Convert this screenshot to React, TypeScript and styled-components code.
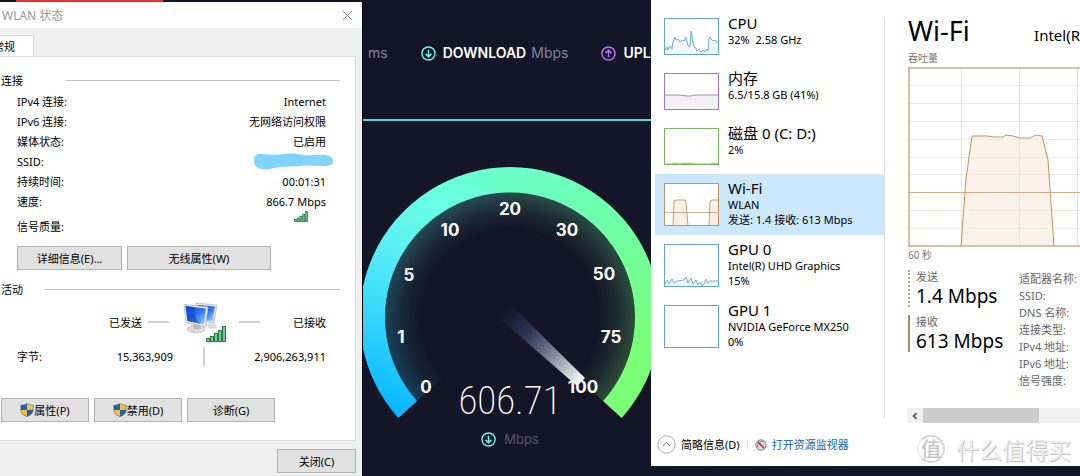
import React from "react";
import styled, { createGlobalStyle, css } from "styled-components";

const UI_FONT = '"Noto Sans", "Noto Sans CJK SC", sans-serif';
const DIAL_FONT = 'Inter, "Open Sans", sans-serif';

const GlobalStyle = createGlobalStyle`
  *, *::before, *::after { box-sizing: border-box; }
  body {
    margin: 0;
    background: #141526;
    font-family: ${UI_FONT};
    font-size: 11px;
    line-height: 15px;
    color: #000;
  }
  h1, h2, h3, p, dl, dd, dt, ul { margin: 0; padding: 0; font-weight: 400; }
  button { font: inherit; color: inherit; cursor: pointer; }
  svg { display: block; flex: none; }
`;

const Desktop = styled.main`
  display: grid;
  grid-template-columns: minmax(0, 363fr) minmax(0, 288fr) minmax(0, 429fr);
  min-height: 100vh;
  overflow: hidden;
  white-space: nowrap;
`;

/* ---------- WLAN status dialog ---------- */

const Dialog = styled.section`
  display: flex;
  flex-direction: column;
  min-width: 0;
  overflow: hidden;
  background: #efefef;
  border-right: 1px solid #05060c;
`;

const BackdropEdge = styled.div`
  display: flex;
  height: 2px;
  padding-left: 16px;
  background: #141526;
  &::before {
    content: "";
    width: 147px;
    background: #ee2d2d;
  }
`;

const TitleBar = styled.header`
  display: flex;
  align-items: center;
  justify-content: space-between;
  height: 26px;
  padding: 0 9px 0 2px;
  background: #fff;
  color: #999;
`;

const DialogTitle = styled.h1`
  font-size: 12px;
`;

const CloseButton = styled.button`
  padding: 0;
  border: 0;
  background: none;
  color: #888;
`;

const TabStrip = styled.div`
  display: flex;
  padding-top: 7px;
`;

const Tab = styled.button`
  width: 34px;
  height: 22px;
  margin-bottom: -1px;
  padding: 0 18px 0 0;
  display: flex;
  justify-content: flex-end;
  align-items: center;
  border: 1px solid #dcdcdc;
  border-width: 1px 1px 0 0;
  background: #fff;
`;

const TabPanel = styled.div`
  flex: 1;
  margin-right: 6px;
  padding: 16px 15px 18px 1px;
  border: 1px solid #dcdcdc;
  border-left: 0;
  background: #fff;
`;

const SectionHead = styled.div<{ $gap: number }>`
  display: flex;
  align-items: center;
  gap: ${(p) => p.$gap}px;
  height: 15px;
  &::after {
    content: "";
    flex: 1;
    height: 1px;
    background: #bfbfbf;
  }
`;

const SectionTitle = styled.h2`
  font-size: 11px;
`;

const Facts = styled.dl`
  padding: 3px 14px 0 16px;
`;

const Fact = styled.div<{ $tall?: boolean }>`
  display: flex;
  justify-content: space-between;
  align-items: ${(p) => (p.$tall ? "flex-end" : "center")};
  height: ${(p) => (p.$tall ? 23 : 20)}px;
`;

const SignalValue = styled.dd`
  align-self: flex-start;
  padding-right: 18px;
`;

const HiddenName = styled.dd`
  margin-right: -7px;
`;

const ButtonRow = styled.div`
  display: flex;
  gap: 5px;
`;

const ConnectionActions = styled(ButtonRow)`
  padding: 12px 0 12px 16px;
`;

const DeviceActions = styled(ButtonRow)`
  padding-top: 30px;
`;

const PushButton = styled.button<{ $width: number }>`
  display: flex;
  align-items: center;
  justify-content: center;
  width: ${(p) => p.$width}px;
  height: 24px;
  padding: 0;
  border: 1px solid #b4b4b4;
  background: #e1e1e1;
`;

const Activity = styled.div`
  display: grid;
  grid-template-columns: minmax(0, 156fr) 62px minmax(0, 91fr);
  align-items: center;
  padding: 3px 14px 0 16px;
`;

const Dashed = styled.div<{ $side: "left" | "right" }>`
  display: flex;
  align-items: center;
  gap: 6px;
  height: 44px;
  ${(p) =>
    p.$side === "left"
      ? css`
          justify-content: flex-end;
          padding-right: 4px;
          &::after { content: ""; width: 21px; height: 2px; background: #d2d2d2; }
        `
      : css`
          justify-content: space-between;
          padding-left: 4px;
          &::before { content: ""; width: 21px; height: 2px; background: #d2d2d2; }
        `}
`;

const Center = styled.div`
  display: flex;
  justify-content: center;
`;

const Divider = styled.div`
  width: 2px;
  height: 19px;
  background: #d2d2d2;
`;

const Counter = styled.div`
  display: flex;
  justify-content: space-between;
  align-items: center;
  height: 24px;
`;

const DialogFooter = styled.footer`
  display: flex;
  justify-content: flex-end;
  padding: 8px 6px 3px 0;
`;

/* ---------- Speed test ---------- */

const SpeedTest = styled.section`
  display: flex;
  flex-direction: column;
  min-width: 0;
  overflow: hidden;
  background: #141526;
  font-family: ${DIAL_FONT};
  color: #fff;
`;

const Readings = styled.header`
  display: flex;
  gap: 33px;
  padding: 43px 0 56px 5px;
  border-bottom: 2px solid #58d8d4;
  font-size: 14px;
  line-height: 20px;
`;

const Reading = styled.div`
  display: flex;
  align-items: center;
  flex: none;
`;

const ReadingName = styled.strong`
  margin: 0 5px 0 7px;
  font-weight: 600;
`;

const Unit = styled.span<{ $dim?: boolean }>`
  color: ${(p) => (p.$dim ? "#55566a" : "#8183a0")};
`;

const Gauge = styled.div`
  display: grid;
  justify-content: center;
  padding: 39px 0 0 6px;
  > * { grid-area: 1 / 1; }
`;

const GaugeLabel = styled.text`
  font-size: 17px;
  font-weight: 700;
  fill: #fff;
  text-anchor: middle;
`;

const Readout = styled.div`
  align-self: end;
  display: flex;
  flex-direction: column;
  align-items: center;
  padding-bottom: 25px;
`;

const Speed = styled.output`
  font-family: "Roboto Condensed", Roboto, sans-serif;
  font-size: 39px;
  font-weight: 200;
  line-height: 44px;
`;

const SpeedUnit = styled.div`
  display: flex;
  align-items: center;
  gap: 8px;
  padding-top: 6px;
  font-size: 13px;
  line-height: 20px;
`;

/* ---------- Task manager ---------- */

const TaskManager = styled.section`
  display: flex;
  flex-direction: column;
  min-width: 0;
  overflow: hidden;
  margin-bottom: 10px;
  background: #fff;
`;

const Performance = styled.div`
  display: grid;
  grid-template-columns: 234px minmax(0, 1fr);
  flex: 1;
`;

const Resources = styled.nav`
  margin: 18px 0 5px;
  border-right: 1px solid #dcdcdc;
`;

const ResourceList = styled.ul`
  margin-top: -9px;
  padding-left: 4px;
  list-style: none;
`;

const Resource = styled.button<{ $active?: boolean }>`
  display: flex;
  align-items: flex-start;
  gap: 9px;
  width: 100%;
  padding: 9px;
  border: 0;
  background: ${(p) => (p.$active ? "#cce8ff" : "transparent")};
  text-align: left;
`;

const ResourceText = styled.span`
  display: flex;
  flex-direction: column;
  margin: -4px 0 -9px;
`;

const ResourceName = styled.span`
  font-size: 15px;
  line-height: 18px;
`;

const Detail = styled.div`
  min-width: 0;
  overflow: hidden;
  padding: 12px 0 0 23px;
`;

const DetailHead = styled.header`
  display: flex;
  align-items: baseline;
  justify-content: space-between;
`;

const DetailTitle = styled.h2`
  font-size: 27px;
  line-height: 38px;
`;

const Adapter = styled.p`
  font-size: 15px;
`;

const AxisLabel = styled.p`
  height: 17px;
  font-size: 10px;
  line-height: 16px;
  color: #777;
`;

const Stats = styled.div`
  display: flex;
  gap: 16px;
  padding-top: 6px;
`;

const Rates = styled.dl`
  display: flex;
  flex-direction: column;
  gap: 8px;
  width: 95px;
`;

const Rate = styled.div<{ $dotted?: boolean }>`
  height: 37px;
  padding-left: 6px;
  border-left: 2px ${(p) => (p.$dotted ? "dotted #c9a084" : "solid #a98a63")};
  dt { line-height: 14px; color: #666; }
  dd { font-size: 19px; line-height: 24px; color: #000; }
`;

const Properties = styled.ul`
  list-style: none;
  line-height: 17px;
  color: #666;
`;

const ScrollBar = styled.div`
  display: flex;
  height: 15px;
  margin: 19px 0 0 -1px;
  background: #f0f0f0;
`;

const ScrollArrow = styled.button`
  display: flex;
  align-items: center;
  justify-content: center;
  width: 16px;
  padding: 0;
  border: 0;
  background: none;
`;

const ScrollThumb = styled.div`
  width: 67%;
  background: #cdcdcd;
`;

const StatusBar = styled.footer`
  display: flex;
  align-items: center;
  height: 43px;
  padding: 0 9px 0 6px;
`;

const LessButton = styled.button`
  display: flex;
  align-items: center;
  gap: 5px;
  padding: 0 7px 0 0;
  border: 0;
  background: none;
`;

const MonitorLink = styled.a`
  display: flex;
  align-items: center;
  gap: 5px;
  padding-left: 7px;
  color: #1464c0;
  text-decoration: none;
`;

const Separator = styled.span`
  width: 1px;
  height: 9px;
  background: #ddd;
`;

const Watermark = styled.div`
  display: flex;
  align-items: center;
  gap: 11px;
  margin-left: auto;
  padding-top: 8px;
  font-family: "Noto Sans CJK SC", sans-serif;
  font-size: 23px;
  line-height: 28px;
  color: #eee;
  text-shadow: 1px 1px 0 #c4c4c4;
`;

const Seal = styled.span`
  display: flex;
  align-items: center;
  justify-content: center;
  width: 28px;
  height: 28px;
  border: 2px solid #d6d6d6;
  border-left-color: #eee;
  border-radius: 50%;
  font-size: 20px;
  font-weight: 500;
  color: #c6c6c6;
  text-shadow: none;
`;

/* ---------- Drawings ---------- */

const SignalBars = ({ width, height }: { width: number; height: number }) => (
  <svg width={width} height={height} viewBox="0 0 20 16" aria-hidden="true">
    {[3, 5, 8, 11, 15].map((h, i) => (
      <rect key={h} x={i * 4 + 0.5} y={15.5 - h} width="3" height={h} fill="#6dbb83" stroke="#1d7a3b" />
    ))}
  </svg>
);

const Shield = () => (
  <svg width="14" height="14" viewBox="0 0 14 14" aria-hidden="true">
    <path d="M7 .5C5.300 1.800 3.200 2.200.8 2.200V6.500C.8 10 3.500 12.500 7 13.600Z" fill="#1c62b8" />
    <path d="M7 .5C8.700 1.800 10.800 2.200 13.200 2.200V6.500C13.200 10 10.500 12.500 7 13.600Z" fill="#fbc02d" />
    <path d="M.8 7H7V13.600C3.500 12.500.8 10 .8 7Z" fill="#fbc02d" />
    <path d="M7 7H13.200C13.200 10 10.500 12.500 7 13.600Z" fill="#1c62b8" />
    <path d="M7 .5C5.300 1.800 3.200 2.200.8 2.200V6.500C.8 10 3.500 12.500 7 13.600C10.500 12.500 13.200 10 13.200 6.500V2.200C10.800 2.200 8.700 1.800 7 .5Z" fill="none" stroke="#71716a" strokeWidth=".7" />
  </svg>
);

const Computers = () => (
  <svg width="43" height="40" viewBox="0 0 43 40" aria-hidden="true">
    <defs>
      <linearGradient id="screen" x1="0" y1="0" x2="1" y2="1">
        <stop offset="0" stopColor="#1b55d8" />
        <stop offset=".5" stopColor="#2c72ee" />
        <stop offset="1" stopColor="#a9dcff" />
      </linearGradient>
    </defs>
    <path d="M13 1L34 3L31 21L15 19Z" fill="#e4e4e4" stroke="#b9b9b9" strokeWidth=".7" />
    <path d="M15 3L32 4.500L29.500 19L17 18Z" fill="url(#screen)" />
    <path d="M22 22L31 21L35 25L28 28Z" fill="#ddd" />
    <ellipse cx="13" cy="27" rx="9" ry="4" fill="#dcdcdc" stroke="#bbb" strokeWidth=".6" />
    <path d="M11 21H17L18 27H10Z" fill="#bcbcbc" />
    <path d="M1 2.500L25 5L22.500 25L3 20.500Z" fill="#ececec" stroke="#adadad" strokeWidth=".7" />
    <path d="M2.500 4L23 6.500L21 22.500L4.500 19Z" fill="url(#screen)" />
    <path d="M2.500 4L12 5.200C10 10 12 16 17 21.600L4.500 19Z" fill="#0b43c6" opacity=".6" />
    <svg x="23" y="24" width="20" height="16" viewBox="0 0 20 16">
      {[3, 5, 8, 11, 15].map((h, i) => (
        <rect key={h} x={i * 4 + 0.5} y={15.5 - h} width="3" height={h} fill="#79c28c" stroke="#2b8049" />
      ))}
    </svg>
  </svg>
);

const CircleArrow = ({ color, up }: { color: string; up?: boolean }) => (
  <svg width="15" height="15" viewBox="0 0 16 16" fill="none" stroke={color} strokeWidth="1.500" aria-hidden="true">
    <circle cx="8" cy="8" r="7" />
    <path d={up ? "M8 12V4.600M4.800 7.600L8 4.500L11.200 7.600" : "M8 4V11.400M4.800 8.400L8 11.500L11.200 8.400"} />
  </svg>
);

const gaugeMarks: [string, number, number][] = [
  ["0", 71, 233], ["1", 46, 183], ["5", 54, 121], ["10", 95, 76], ["20", 155, 55],
  ["30", 212, 76], ["50", 249, 120], ["75", 256, 183], ["100", 228, 233],
];

const Dial = () => (
  <svg width="310" height="314" viewBox="0 0 310 314" fontFamily={DIAL_FONT} role="img" aria-label="Speed gauge">
    <defs>
      <linearGradient id="left" gradientUnits="userSpaceOnUse" x1="43" y1="258" x2="155" y2="20">
        <stop offset="0" stopColor="#06b4ff" />
        <stop offset=".32" stopColor="#38d8fb" />
        <stop offset=".6" stopColor="#5cf1f2" />
        <stop offset=".8" stopColor="#69ffe6" />
        <stop offset="1" stopColor="#6bffc8" />
      </linearGradient>
      <linearGradient id="right" gradientUnits="userSpaceOnUse" x1="155" y1="20" x2="275" y2="200">
        <stop offset="0" stopColor="#6bffc8" />
        <stop offset=".5" stopColor="#70ffa2" />
        <stop offset="1" stopColor="#7aff76" />
      </linearGradient>
      <radialGradient id="fade" gradientUnits="userSpaceOnUse" cx="155" cy="157.500" r="125">
        <stop offset=".7" stopColor="#fff" stopOpacity="0" />
        <stop offset=".85" stopColor="#fff" stopOpacity=".09" />
        <stop offset="1" stopColor="#fff" stopOpacity=".24" />
      </radialGradient>
      <mask id="glow">
        <rect width="310" height="314" fill="url(#fade)" />
      </mask>
      <linearGradient id="needle" gradientUnits="userSpaceOnUse" x1="148" y1="150" x2="227" y2="223">
        <stop offset="0" stopColor="#2a3760" stopOpacity="0" />
        <stop offset=".3" stopColor="#323d63" stopOpacity=".75" />
        <stop offset=".65" stopColor="#8c90a3" />
        <stop offset="1" stopColor="#fff" />
      </linearGradient>
    </defs>
    <g mask="url(#glow)">
      <path d="M155 157.500L62 241A125 125 0 0 1 155 32.500Z" fill="url(#left)" />
      <path d="M155 157.500V32.500A125 125 0 0 1 248 241Z" fill="url(#right)" />
    </g>
    <path d="M43.300 258A150.500 150.500 0 0 1 155.500 7V32.500A125 125 0 0 0 62 241Z" fill="url(#left)" />
    <path d="M155 7A150.500 150.500 0 0 1 266.700 258L248 241A125 125 0 0 0 155 32.500Z" fill="url(#right)" />
    {gaugeMarks.map(([label, x, y]) => (
      <GaugeLabel key={label} x={x} y={y}>{label}</GaugeLabel>
    ))}
    <path d="M142 156L155 144L230 218L222 226Z" fill="url(#needle)" />
  </svg>
);

type ThumbProps = { color: string; tall?: boolean; line?: string; fill?: string; mid?: boolean };

const Thumb = ({ color, tall, line, fill, mid }: ThumbProps) => {
  const h = tall ? 43 : 37;
  return (
    <svg width="55" height={h} viewBox={`0 0 55 ${h}`} fill="none" aria-hidden="true">
      <rect width="55" height={h} fill="#fff" />
      {line && <path d={`M0 ${h}L${line}L55 ${h}Z`} fill={fill} />}
      {line && <polyline points={line} stroke={color} strokeWidth=".9" />}
      {mid && <path d="M0 29.500H55" stroke={color} strokeWidth=".7" />}
      <rect x=".5" y=".5" width="54" height={h - 1} stroke={color} />
    </svg>
  );
};

const resources: { name: string; lines: string[]; thumb: ThumbProps; active?: boolean }[] = [
  {
    name: "CPU",
    lines: ["32%\u00a0 2.58 GHz"],
    thumb: {
      color: "#5fa9c4",
      fill: "#eef5fb",
      line: "0,27 1,32 3,29 4,32 6,28 8,31 9,23 10,22 11,19 12,22 14,21 16,24 18,22 20,23 22,19 23,24 24,27 25,29 26,28 27,13 28,17 29,25 30,29 32,30 33,33 35,31 37,34 39,32 41,34 43,31 44,33 45,20 46,19 47,21 49,23 51,22 53,24 55,25",
    },
  },
  {
    name: "内存",
    lines: ["6.5/15.8 GB (41%)"],
    thumb: { color: "#ad72c0", fill: "#f2eff4", line: "0,22 13,22 15,22 23,23 27,23 29,22 55,22" },
  },
  {
    name: "磁盘 0 (C: D:)",
    lines: ["2%"],
    thumb: { color: "#79b85b", fill: "#e6f3df", line: "0,36 8,36 10,35 14,36 26,35 30,36 46,36 49,35 52,36 55,35" },
  },
  {
    name: "Wi-Fi",
    lines: ["WLAN", "发送: 1.4 接收: 613 Mbps"],
    active: true,
    thumb: { color: "#bf9468", fill: "#fbf0e6", tall: true, mid: true, line: "9,43 10,18 12,17 21,17 22,19 24,43 45,43 46,18 48,17 55,17" },
  },
  {
    name: "GPU 0",
    lines: ["Intel(R) UHD Graphics", "15%"],
    thumb: {
      color: "#5fa9c4",
      fill: "#eef5fb",
      tall: true,
      line: "0,41 3,36 5,40 8,35 10,39 13,37 20,36 22,33 24,39 27,34 29,40 32,36 34,41 36,38 38,42 40,40 42,35 44,39 46,37 55,37",
    },
  },
  { name: "GPU 1", lines: ["NVIDIA GeForce MX250", "0%"], thumb: { color: "#5fa9c4", tall: true } },
];

const throughput = "53,179 58,112 64,69 79,69 86,70 95,70 98,68 105,69 112,71 122,71 128,68 134,69 140,93 146,179";

const ThroughputChart = () => (
  <svg width="100%" height="180" fill="none" role="img" aria-label="吞吐量">
    {[18, 36, 54, 72, 90, 107, 143, 161].map((y) => (
      <line key={y} x1="0" x2="100%" y1={y + 0.5} y2={y + 0.5} stroke="#f0e8de" />
    ))}
    <polygon points={throughput} fill="#fbf2ea" />
    <defs>
      <pattern id="columns" x="53" width="58" height="180" patternUnits="userSpaceOnUse">
        <path d="M.5 0V180" stroke="#ece2d6" />
      </pattern>
    </defs>
    <rect width="100%" height="180" fill="url(#columns)" />
    {[72, 90, 107, 143, 161].map((y) => (
      <line key={y} x1="62" x2="140" y1={y + 0.5} y2={y + 0.5} stroke="#f3e6d8" />
    ))}
    <line x1="0" x2="100%" y1="125.500" y2="125.500" stroke="#d3ad8b" />
    <polyline points={throughput} stroke="#c4935f" />
    <path d="M1 0V180" stroke="#c8ab88" strokeWidth="1.500" />
    <line x1="0" x2="100%" y1="1" y2="1" stroke="#c8ab88" strokeWidth="1.500" />
    <line x1="0" x2="100%" y1="179" y2="179" stroke="#c8ab88" strokeWidth="1.500" />
  </svg>
);

const facts: [string, string][] = [
  ["IPv4 连接:", "Internet"],
  ["IPv6 连接:", "无网络访问权限"],
  ["媒体状态:", "已启用"],
  ["SSID:", ""],
  ["持续时间:", "00:01:31"],
  ["速度:", "866.7 Mbps"],
];

const properties = ["适配器名称:", "SSID:", "DNS 名称:", "连接类型:", "IPv4 地址:", "IPv6 地址:", "信号强度:"];

export default function App() {
  return (
    <>
      <GlobalStyle />
      <Desktop>
        <Dialog aria-label="WLAN 状态">
          <BackdropEdge />
          <TitleBar>
            <DialogTitle>WLAN 状态</DialogTitle>
            <CloseButton aria-label="关闭">
              <svg width="11" height="11" viewBox="0 0 11 11" stroke="currentColor" fill="none">
                <path d="M1 1L10 10M10 1L1 10" />
              </svg>
            </CloseButton>
          </TitleBar>
          <TabStrip>
            <Tab>常规</Tab>
          </TabStrip>
          <TabPanel>
            <SectionHead $gap={43}>
              <SectionTitle>连接</SectionTitle>
            </SectionHead>
            <Facts>
              {facts.map(([label, value]) => (
                <Fact key={label}>
                  <dt>{label}</dt>
                  {value ? (
                    <dd>{value}</dd>
                  ) : (
                    <HiddenName>
                      <svg width="79" height="17" viewBox="0 0 79 17" aria-hidden="true">
                        <path d="M0 6C0 2 3 1 8 1C16 2 24 2 31 1C38 0 44 1 49 2C56 3 64 1 72 2C77 3 79 5 79 8C79 12 76 13 70 13C62 13 54 12 46 13C36 14 28 13 20 15C13 17 7 17 3 14C0 12 0 9 0 6Z" fill="#80d4ff" />
                      </svg>
                    </HiddenName>
                  )}
                </Fact>
              ))}
              <Fact $tall>
                <dt>信号质量:</dt>
                <SignalValue>
                  <SignalBars width={14} height={11} />
                </SignalValue>
              </Fact>
            </Facts>
            <ConnectionActions>
              <PushButton $width={105}>详细信息(E)...</PushButton>
              <PushButton $width={144}>无线属性(W)</PushButton>
            </ConnectionActions>
            <SectionHead $gap={22}>
              <SectionTitle>活动</SectionTitle>
            </SectionHead>
            <Activity>
              <Dashed $side="left">已发送</Dashed>
              <Center><Computers /></Center>
              <Dashed $side="right">已接收</Dashed>
              <Counter><span>字节:</span><span>15,363,909</span></Counter>
              <Center><Divider /></Center>
              <Counter><span /><span>2,906,263,911</span></Counter>
            </Activity>
            <DeviceActions>
              <PushButton $width={88}><Shield />属性(P)</PushButton>
              <PushButton $width={88}><Shield />禁用(D)</PushButton>
              <PushButton $width={88}>诊断(G)</PushButton>
            </DeviceActions>
          </TabPanel>
          <DialogFooter>
            <PushButton $width={79}>关闭(C)</PushButton>
          </DialogFooter>
        </Dialog>

        <SpeedTest aria-label="Speed test">
          <Readings>
            <Reading><Unit>ms</Unit></Reading>
            <Reading>
              <CircleArrow color="#6afff3" />
              <ReadingName>DOWNLOAD</ReadingName>
              <Unit>Mbps</Unit>
            </Reading>
            <Reading>
              <CircleArrow color="#bf71ff" up />
              <ReadingName>UPLOAD</ReadingName>
            </Reading>
          </Readings>
          <Gauge>
            <Dial />
            <Readout>
              <Speed>606.71</Speed>
              <SpeedUnit>
                <CircleArrow color="#6afff3" />
                <Unit $dim>Mbps</Unit>
              </SpeedUnit>
            </Readout>
          </Gauge>
        </SpeedTest>

        <TaskManager aria-label="任务管理器">
          <Performance>
            <Resources>
              <ResourceList>
                {resources.map((r) => (
                  <li key={r.name}>
                    <Resource $active={r.active}>
                      <Thumb {...r.thumb} />
                      <ResourceText>
                        <ResourceName>{r.name}</ResourceName>
                        {r.lines.map((line) => <span key={line}>{line}</span>)}
                      </ResourceText>
                    </Resource>
                  </li>
                ))}
              </ResourceList>
            </Resources>
            <Detail>
              <DetailHead>
                <DetailTitle>Wi-Fi</DetailTitle>
                <Adapter>Intel(R</Adapter>
              </DetailHead>
              <AxisLabel>吞吐量</AxisLabel>
              <ThroughputChart />
              <AxisLabel>60 秒</AxisLabel>
              <Stats>
                <Rates>
                  <Rate $dotted><dt>发送</dt><dd>1.4 Mbps</dd></Rate>
                  <Rate><dt>接收</dt><dd>613 Mbps</dd></Rate>
                </Rates>
                <Properties>
                  {properties.map((p) => <li key={p}>{p}</li>)}
                </Properties>
              </Stats>
              <ScrollBar>
                <ScrollArrow aria-label="向左滚动">
                  <svg width="6" height="8" viewBox="0 0 6 8" fill="none" stroke="#444" strokeWidth="1.500"><path d="M4.500 1L1.500 4L4.500 7" /></svg>
                </ScrollArrow>
                <ScrollThumb />
              </ScrollBar>
            </Detail>
          </Performance>
          <StatusBar>
            <LessButton>
              <svg width="19" height="19" viewBox="0 0 19 19" fill="none" aria-hidden="true">
                <circle cx="9.500" cy="9.500" r="8.700" stroke="#999" strokeWidth=".8" />
                <path d="M6 11L9.500 7.500L13 11" stroke="#777" />
              </svg>
              简略信息(D)
            </LessButton>
            <Separator />
            <MonitorLink href="#">
              <svg width="12" height="12" viewBox="0 0 12 12" aria-hidden="true">
                <circle cx="6" cy="6" r="5.200" fill="#d9dde0" stroke="#85898c" />
                <path d="M3 8.500A4 4 0 0 1 8.500 3" fill="none" stroke="#6d9b7a" />
                <path d="M3 3L9 9" stroke="#d23b32" strokeWidth="1.800" />
              </svg>
              打开资源监视器
            </MonitorLink>
            <Watermark><Seal>值</Seal>什么值得买</Watermark>
          </StatusBar>
        </TaskManager>
      </Desktop>
    </>
  );
}
